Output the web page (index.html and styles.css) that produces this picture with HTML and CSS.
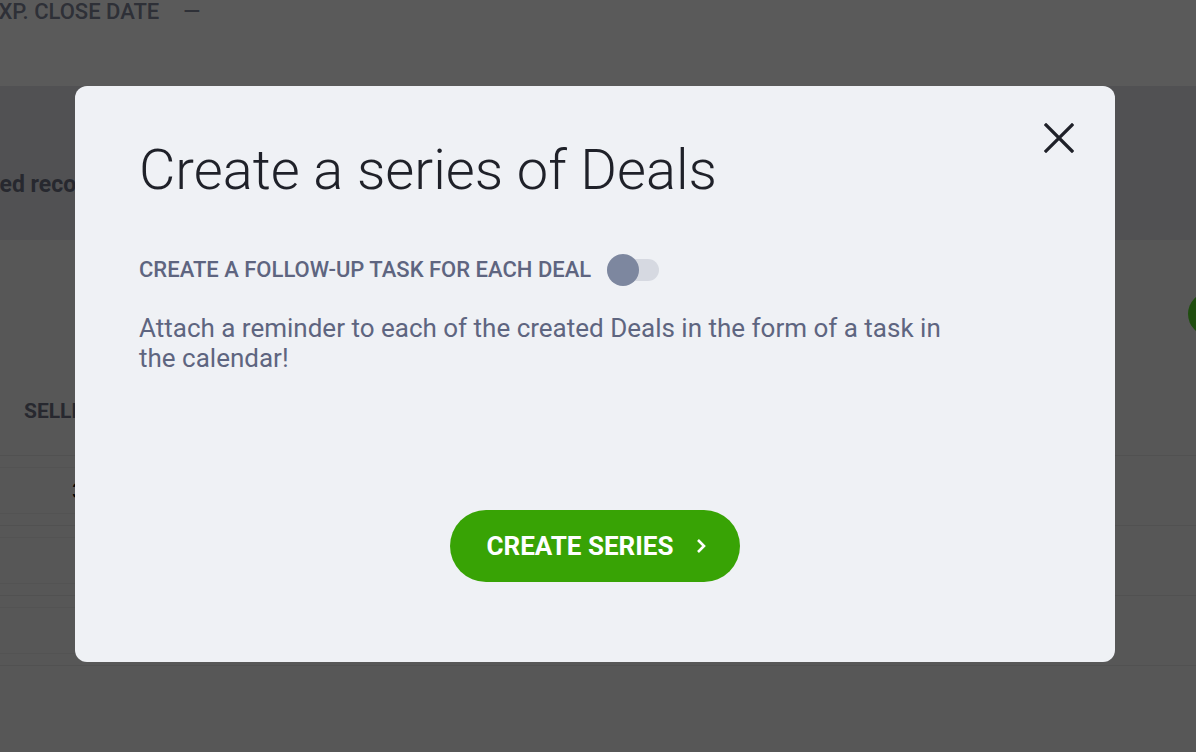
FILE: index.html
```html
<!DOCTYPE html>
<html lang="en">
<head>
<meta charset="utf-8">
<title>Create a series of Deals</title>
<link rel="stylesheet" href="styles.css">
</head>
<body>
<div class="page">
  <div class="summary">
    <div class="summary-row">
      <span class="summary-label">EXP. CLOSE DATE</span>
      <span class="summary-value">—</span>
    </div>
  </div>
  <div class="band">
    <span class="band-text">Linked records</span>
  </div>
  <div class="section">
    <div class="section-head">
      <span class="avatar"></span>
    </div>
    <div class="table-head"><span class="th">SELLER</span></div>
    <div class="row"><span class="cell">3</span></div>
    <div class="row"><span class="cell"></span></div>
    <div class="row"><span class="cell"></span></div>
  </div>
</div>

<div class="overlay">
  <div class="modal" role="dialog" aria-labelledby="modal-title">
    <button class="close" aria-label="Close">
      <svg width="30" height="30" viewBox="0 0 30 30"><path d="M2 2 L28 28 M28 2 L2 28" stroke="#1f2129" stroke-width="3.2" stroke-linecap="square" fill="none"/></svg>
    </button>
    <h1 id="modal-title" class="title">Create a series of Deals</h1>
    <div class="option">
      <span class="option-label">CREATE A FOLLOW-UP TASK FOR EACH DEAL</span>
      <span class="toggle"><span class="knob"></span></span>
    </div>
    <p class="hint">Attach a reminder to each of the created Deals in the form of a task in the calendar!</p>
    <div class="actions">
      <button class="primary">CREATE SERIES
        <svg width="12" height="16" viewBox="0 0 12 16"><path d="M3 2 L9 8 L3 14" stroke="#fff" stroke-width="2.6" fill="none"/></svg>
      </button>
    </div>
  </div>
</div>
</body>
</html>
```
FILE: styles.css
```css
html, body {
  margin: 0;
  padding: 0;
}
body {
  font-family: Roboto, "Liberation Sans", sans-serif;
  width: 1196px;
  height: 752px;
  overflow: hidden;
  position: relative;
  background: #f4f4f4;
}

/* underlying deal page */
.page {
  height: 752px;
  display: flex;
  flex-direction: column;
  background: #f4f4f4;
}
.summary {
  height: 86px;
  background: #fdfdfd;
}
.summary-row {
  display: flex;
  gap: 24px;
  margin-left: -14px;
  font-size: 22px;
  font-weight: 500;
  line-height: 24px;
  color: #80869a;
}
.band {
  height: 154px;
  box-sizing: border-box;
  background: #e2e4e9;
  display: flex;
  align-items: flex-end;
  padding-bottom: 42px;
  margin-left: -44px;
}
.band-text {
  font-size: 23px;
  font-weight: 700;
  line-height: 26px;
  color: #6d7283;
}
.section {
  display: flex;
  flex-direction: column;
}
.section-head {
  height: 137px;
  display: flex;
  justify-content: flex-end;
  align-items: center;
}
.avatar {
  width: 44px;
  height: 44px;
  border-radius: 50%;
  background: #57d82c;
  margin-right: -36px;
  margin-top: 10px;
}
.table-head {
  height: 79px;
  display: flex;
  align-items: center;
  padding-left: 24px;
  padding-bottom: 10px;
  box-sizing: border-box;
  border-bottom: 1px solid #e3e3e3;
}
.th {
  font-size: 21px;
  font-weight: 700;
  color: #6d7283;
}
.row {
  height: 70px;
  box-sizing: border-box;
  border-bottom: 1px solid #e3e3e3;
  display: flex;
  align-items: center;
}
.cell {
  width: 300px;
  height: 47px;
  box-sizing: border-box;
  border-top: 1px solid #e8e8e8;
  border-bottom: 1px solid #e8e8e8;
  display: flex;
  align-items: center;
  padding-left: 72px;
  color: #000;
  font-size: 20px;
}

/* dimmed backdrop */
.overlay {
  position: absolute;
  inset: 0;
  background: rgba(0, 0, 0, 0.645);
  display: flex;
  justify-content: flex-start;
  padding: 86px 0 0 75px;
  box-sizing: border-box;
}
.modal {
  position: relative;
  width: 1040px;
  height: 576px;
  box-sizing: border-box;
  background: #eff1f5;
  border-radius: 12px;
  padding: 50px 64px 0;
  display: flex;
  flex-direction: column;
}
.close {
  position: absolute;
  top: 37px;
  right: 41px;
  width: 30px;
  height: 30px;
  padding: 0;
  border: 0;
  background: none;
  cursor: pointer;
}
.title {
  margin: 0;
  font-size: 56px;
  font-weight: 300;
  line-height: 68px;
  color: #1f2129;
}
.option {
  margin-top: 53px;
  display: flex;
  align-items: center;
  gap: 16px;
}
.option-label {
  font-size: 22px;
  font-weight: 500;
  color: #5e6580;
  line-height: 26px;
}
.toggle {
  position: relative;
  width: 52px;
  height: 22px;
  border-radius: 11px;
  background: #d6d9e1;
}
.knob {
  position: absolute;
  left: 0;
  top: -5px;
  width: 32px;
  height: 32px;
  border-radius: 50%;
  background: #7d879f;
}
.hint {
  margin: 30px 0 0;
  max-width: 820px;
  font-size: 26px;
  line-height: 30px;
  color: #5e6580;
}
.actions {
  margin-top: auto;
  margin-bottom: 80px;
  display: flex;
  justify-content: center;
}
.primary {
  width: 290px;
  height: 72px;
  border: 0;
  border-radius: 36px;
  background: #38a305;
  color: #fff;
  font-family: Roboto, "Liberation Sans", sans-serif;
  font-size: 26px;
  font-weight: 700;
  display: flex;
  align-items: center;
  justify-content: center;
  gap: 22px;
  padding: 0 0 0 4px;
  cursor: pointer;
}
```
